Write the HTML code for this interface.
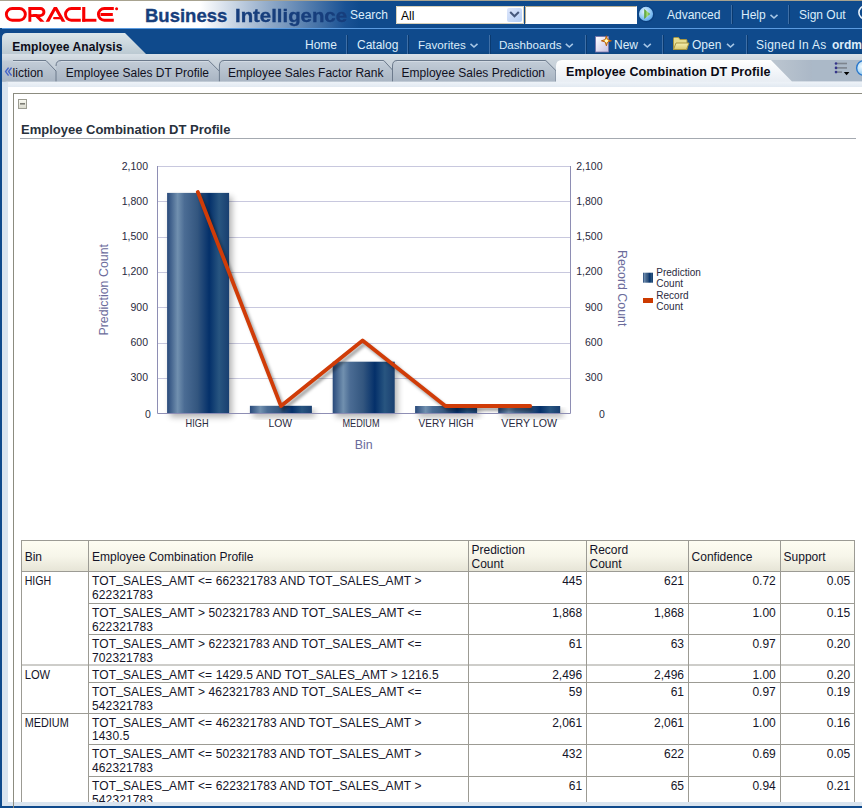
<!DOCTYPE html>
<html><head><meta charset="utf-8">
<style>
html,body{margin:0;padding:0;}
body{width:862px;height:808px;overflow:hidden;position:relative;background:#fff;font-family:"Liberation Sans",sans-serif;}
.a{position:absolute;}
.t{position:absolute;white-space:pre;line-height:1;}
#topline{left:0;top:0;width:862px;height:1px;background:#a8a390;}
#hdr{left:0;top:1px;width:862px;height:27px;background:linear-gradient(to right,#fff 0,#fff 200px,#9fb5cf 260px,#1a5294 345px,#0f4a8c 360px,#0f4a8c 100%);}
#hline{left:0;top:28px;width:862px;height:1px;background:#5b9be0;}
#nav{left:0;top:29px;width:862px;height:25px;background:linear-gradient(#0f4a8c 0,#0f4a8c 21px,#0c4680 25px);}
.nv{color:#dcedfa;font-size:12px;margin-top:1px;}
.sep{position:absolute;width:1px;background:#3f6fa6;border-right:1px solid #0a3a70;}
#strip{left:0;top:54px;width:862px;height:28px;background:linear-gradient(#d5dde4,#c5cfd9 6px,#b7c3cf 27px);}
#below{left:2px;top:81px;width:860px;height:6px;background:#e1e9f1;}
#leftbar{left:0;top:28px;width:2px;height:780px;background:#0f4a8c;}
#frameL{left:2px;top:82px;width:6px;height:724px;background:#d9e4ef;}
#frameB{left:2px;top:802px;width:860px;height:4px;background:#d9e4ef;}
#botbar{left:0;top:806px;width:862px;height:2px;background:#0f4a8c;}
#box{left:13px;top:93px;width:900px;height:900px;border:1px solid #8c8c80;box-sizing:border-box;}
.tb{font-size:12px;color:#111;}
.tab{font-size:12px;color:#10101e;}
</style></head><body>
<div class="a" id="topline"></div>
<div class="a" id="hdr"></div>
<div class="a" id="hline"></div>
<div class="a" id="nav"></div>
<div class="a" id="strip"></div>
<div class="a" id="leftbar"></div>

<!-- ORACLE logo -->
<svg class="a" style="left:0;top:0" width="130" height="28" viewBox="0 0 130 28">
 <g fill="none" stroke="#f80000" stroke-width="2.9">
  <rect x="6.35" y="8.45" width="19" height="11.8" rx="5.9" ry="5.9"/>
  <path d="M113.8,8.45 H104.3 A5.85,5.85 0 0 0 104.3,20.25 H113.8"/>
  <path d="M80.8,8.45 H71.4 A5.85,5.85 0 0 0 71.4,20.25 H80.8"/>
  <path d="M29.85,7 V21.7 M28.3,8.5 H40.4 A3.55,3.55 0 0 1 40.4,15.6 H31"/>
 </g>
 <g fill="#f80000">
  <polygon points="32.6,14.1 36.8,14.1 44.6,21.7 40.2,21.7"/>
  <polygon points="45.6,21.7 53.9,7 56.9,7 65.4,21.7 61.8,21.7 55.4,10.6 49.3,21.7"/>
  <path d="M54.2,17 H59.5 L60.8,19.3 H54.2 A1.15,1.15 0 0 1 54.2,17 Z"/>
  <rect x="82.2" y="7" width="3.1" height="14.7"/>
  <rect x="82.2" y="18.8" width="14.2" height="2.9"/>
  <rect x="100.5" y="13" width="12.3" height="3"/>
  <circle cx="116.6" cy="8.8" r="1.5"/>
 </g>
</svg>

<div class="t" style="left:145px;top:7px;font-size:18.5px;font-weight:bold;color:#173e7c;-webkit-text-stroke:0.35px #173e7c">Business</div>
<div class="t" style="left:234.5px;top:7px;font-size:18.5px;font-weight:bold;color:#173e7c;-webkit-text-stroke:0.35px #173e7c;transform-origin:0 0;transform:scaleX(1.1)">Intelligence</div>
<div class="t nv" style="left:350px;top:9px;margin-top:0">Search</div>
<svg class="a" style="left:390px;top:0" width="280" height="28" viewBox="390 0 280 28">
 <defs>
  <linearGradient id="gDd" x1="0" y1="0" x2="1" y2="1"><stop offset="0" stop-color="#dfe7fb"/><stop offset="1" stop-color="#b3cdf5"/></linearGradient>
  <radialGradient id="gGo" cx="0.4" cy="0.35" r="0.7"><stop offset="0" stop-color="#e4f4ff"/><stop offset="0.6" stop-color="#93c9f5"/><stop offset="1" stop-color="#5aa6ea"/></radialGradient>
  <linearGradient id="gTri" x1="0" y1="0" x2="1" y2="0"><stop offset="0" stop-color="#3f8f1f"/><stop offset="0.5" stop-color="#a9de7a"/><stop offset="1" stop-color="#4b9a25"/></linearGradient>
 </defs>
 <rect x="396" y="6" width="128" height="18" fill="#fff"/>
 <path d="M396.5,23.5 V6.5 H523.5 V23.5 Z" fill="none" stroke="#d8d0b8" stroke-width="1"/>
 <rect x="507" y="8" width="15" height="14" rx="2" fill="url(#gDd)"/>
 <path d="M510.2,12 L514.5,16.3 L518.8,12" fill="none" stroke="#46587c" stroke-width="2"/>
 <rect x="525" y="6" width="112" height="18" fill="#fff"/>
 <path d="M525.5,23.5 V6.5 H636.5" fill="none" stroke="#b8ad90" stroke-width="1"/>
 <circle cx="646.2" cy="14.2" r="8.2" fill="#0a3a78" opacity="0.7"/>
 <circle cx="646" cy="13.9" r="7.1" fill="url(#gGo)"/>
 <path d="M644.3,9.1 L650.2,14 L644.3,18.9 Z" fill="url(#gTri)"/>
</svg>
<div class="t" style="left:401px;top:10px;font-size:12px;color:#000">All</div>
<div class="t nv" style="left:667px;top:9px;margin-top:0">Advanced</div>
<div class="sep" style="left:731px;top:5px;height:19px"></div>
<div class="t nv" style="left:741px;top:9px;margin-top:0">Help</div>
<div class="sep" style="left:788px;top:5px;height:19px"></div>
<div class="t nv" style="left:799px;top:9px;margin-top:0">Sign Out</div>

<!-- nav row 2 -->
<div class="t nv" style="left:305px;top:38px;">Home</div>
<div class="sep" style="left:346px;top:35px;height:19px"></div>
<div class="t nv" style="left:357px;top:38px;">Catalog</div>
<div class="sep" style="left:407px;top:35px;height:19px"></div>
<div class="t nv" style="left:418px;top:38px;font-size:11.6px">Favorites</div>
<div class="sep" style="left:489px;top:35px;height:19px"></div>
<div class="t nv" style="left:499px;top:38px;font-size:11.6px">Dashboards</div>
<div class="sep" style="left:585px;top:35px;height:19px"></div>
<div class="t nv" style="left:614px;top:38px;">New</div>
<div class="sep" style="left:662px;top:35px;height:19px"></div>
<div class="t nv" style="left:692px;top:38px;">Open</div>
<div class="sep" style="left:746px;top:35px;height:19px"></div>
<div class="t nv" style="left:756px;top:38px;letter-spacing:0.25px">Signed In As</div>
<div class="t nv" style="left:832px;top:38px;font-weight:bold">ordm</div>


<!-- nav icons -->
<svg class="a" style="left:460px;top:28px" width="330" height="26" viewBox="460 28 330 26">
 <defs>
  <linearGradient id="gDoc" x1="0" y1="0" x2="1" y2="1"><stop offset="0" stop-color="#ffffff"/><stop offset="1" stop-color="#c6c0e0"/></linearGradient>
  <radialGradient id="gStar" cx="0.5" cy="0.5" r="0.5"><stop offset="0" stop-color="#fffbd0"/><stop offset="0.5" stop-color="#ffd820"/><stop offset="1" stop-color="#c86010"/></radialGradient>
  <linearGradient id="gFold" x1="0" y1="0" x2="0" y2="1"><stop offset="0" stop-color="#f6f0b0"/><stop offset="1" stop-color="#d8c870"/></linearGradient>
 </defs>
 <g fill="none" stroke="#a6c6e6" stroke-width="1.6">
  <path d="M470.5,43.8 L474,47 L477.5,43.8"/>
  <path d="M565.8,43.8 L569.3,47 L572.8,43.8"/>
  <path d="M643.8,43.8 L647.3,47 L650.8,43.8"/>
  <path d="M727,43.8 L730.5,47 L734,43.8"/>
 </g>
 <rect x="595.6" y="36.6" width="13" height="15.4" fill="url(#gDoc)" stroke="#7a74a8" stroke-width="0.8"/>
 <path d="M606.4,35.8 L607.5,39.6 L611.4,40.8 L607.5,42 L606.4,45.8 L605.3,42 L601.4,40.8 L605.3,39.6 Z" fill="#ffe030" stroke="#b85a10" stroke-width="1"/>
 <circle cx="606.4" cy="40.8" r="1.6" fill="#fffbd0"/>
 <path d="M673.5,49.5 V38.5 Q673.5,37.5 674.5,37.5 H678.5 L680,39.5 H686 Q687,39.5 687,40.5 V49.5 Z" fill="#e6dc90" stroke="#a89640" stroke-width="1"/>
 <path d="M673.5,49.5 L676,43 H689 L686.5,49.5 Z" fill="url(#gFold)" stroke="#a89640" stroke-width="1"/>
</svg>
<svg class="a" style="left:850px;top:0" width="12" height="28" viewBox="850 0 12 28"><circle cx="865.5" cy="12.5" r="6.6" fill="none" stroke="#e8f2fc" stroke-width="1.6"/></svg>
<svg class="a" style="left:740px;top:0" width="60" height="28" viewBox="740 0 60 28">
 <path d="M770.5,14.8 L774,18 L777.5,14.8" fill="none" stroke="#a6c6e6" stroke-width="1.6"/>
</svg>


<!-- Employee Analysis tab -->
<svg class="a" style="left:0;top:28px" width="160" height="27" viewBox="0 0 160 27">
 <defs><linearGradient id="gEA" x1="0" y1="0" x2="0" y2="1"><stop offset="0" stop-color="#dce6ea"/><stop offset="1" stop-color="#bac8d1"/></linearGradient></defs>
 <path d="M2,27 L2,10 Q2,5 7,5 L125,5 L147,27 Z" fill="url(#gEA)"/>
</svg>
<div class="t" style="left:12.3px;top:40.8px;font-size:12px;font-weight:bold;color:#0c0c18;letter-spacing:0.07px">Employee Analysis</div>


<!-- sub tabs -->
<svg class="a" style="left:0;top:54px" width="862" height="34" viewBox="0 54 862 34">
 <defs>
  <linearGradient id="gTab" x1="0" y1="0" x2="0" y2="1"><stop offset="0" stop-color="#c3cdd8"/><stop offset="1" stop-color="#a9b5c3"/></linearGradient>
  <linearGradient id="gAct" x1="0" y1="0" x2="0" y2="1"><stop offset="0" stop-color="#ffffff"/><stop offset="1" stop-color="#e1e8f0"/></linearGradient>
  <linearGradient id="gShadow" x1="0" y1="0" x2="1" y2="0"><stop offset="0" stop-color="#bcc6d0"/><stop offset="1" stop-color="#abb8c7"/></linearGradient>
 </defs>
 <linearGradient id="gStrip" x1="0" y1="0" x2="0" y2="1"><stop offset="0" stop-color="#d9e1e7"/><stop offset="0.25" stop-color="#cbd4dc"/><stop offset="1" stop-color="#bcc7d2"/></linearGradient>
 <rect x="2" y="54" width="860" height="28" fill="url(#gStrip)"/>
 <rect x="770" y="60" width="92" height="22" fill="#abb9c8"/>
 <path d="M771,60 L792,81.5 L812,81.5 L812,60 Z" fill="url(#gShadow)"/>
 <path d="M2,81.5 V60.5 H46 L56,71 V81.5 Z" fill="url(#gTab)"/>
 <path d="M56,81.5 V66 Q56,60.5 61,60.5 H208.7 L219,70.8 V81.5 Z" fill="url(#gTab)"/>
 <path d="M219.4,81.5 V66 Q219.4,60.5 224,60.5 H383.8 L392.5,70 V81.5 Z" fill="url(#gTab)"/>
 <path d="M392.5,81.5 V66 Q392.5,60.5 397,60.5 H545.8 L556,70.7 V81.5 Z" fill="url(#gTab)"/>
 <g fill="none" stroke="#6c7a8c" stroke-width="1">
  <path d="M13,60.5 H46 L56,71 V81.5"/>
  <path d="M56,66 Q56,60.5 61,60.5 H208.7 L219,70.8"/>
  <path d="M219.4,81.5 V66 Q219.4,60.5 224,60.5 H383.8 L392.5,70"/>
  <path d="M392.5,81.5 V66 Q392.5,60.5 397,60.5 H545.8 L556,70.7 V81.5"/>
 </g>
 <g fill="none" stroke="#d2dae3" stroke-width="1">
  <path d="M13,61.5 H45.5"/><path d="M61,61.5 H208"/><path d="M224,61.5 H383"/><path d="M397,61.5 H545"/>
 </g>
 <path d="M556,88 V66 Q556,60 562,60 H771 L792,81.5 H862 V88 Z" fill="url(#gAct)"/>
 <linearGradient id="gFr" x1="0" y1="0" x2="0" y2="1"><stop offset="0" stop-color="#eef3f8"/><stop offset="1" stop-color="#dfe7f0"/></linearGradient>
 <path d="M2,88 V87 Q2,81.8 7,81.8 H862 V88 Z" fill="url(#gFr)"/>
</svg>
<svg class="a" style="left:826px;top:56px" width="36" height="26" viewBox="826 56 36 26">
 <defs><radialGradient id="gHelp" cx="0.35" cy="0.4" r="0.6"><stop offset="0" stop-color="#f0faff"/><stop offset="1" stop-color="#8fc8f0"/></radialGradient></defs>
 <g stroke="#7c848e" stroke-width="1.6"><path d="M837,63.5 H847"/><path d="M837,67.9 H847"/><path d="M837,72.1 H842"/></g>
 <g fill="#35358a"><circle cx="836" cy="63.5" r="1.3"/><circle cx="836" cy="67.9" r="1.3"/><circle cx="836" cy="72.1" r="1.3"/></g>
 <path d="M843.8,72 H849.4 L846.6,75.2 Z" fill="#000"/>
 <circle cx="864" cy="68" r="7.4" fill="url(#gHelp)" stroke="#2a78cc" stroke-width="1.4"/>
</svg>
<svg class="a" style="left:0;top:60px" width="14" height="22" viewBox="0 60 14 22"><g fill="none" stroke="#4766c8" stroke-width="1.5"><path d="M8.6,67.6 L5.6,71.6 L8.6,75.6"/><path d="M11.6,67.6 L8.6,71.6 L11.6,75.6"/></g></svg>
<div class="t tab" style="left:12.6px;top:67px;">liction</div>
<div class="t tab" style="left:65.8px;top:67px;">Employee Sales DT Profile</div>
<div class="t tab" style="left:228px;top:67px;">Employee Sales Factor Rank</div>
<div class="t tab" style="left:401.6px;top:67px;">Employee Sales Prediction</div>
<div class="t" style="left:566px;top:66px;font-size:12.5px;font-weight:bold;color:#0a0a14;letter-spacing:0.1px">Employee Combination DT Profile</div>

<div class="a" id="frameL"></div>
<div class="a" style="left:8px;top:87px;width:854px;height:715px;background:#fff"></div>
<div class="a" id="frameB"></div>
<div class="a" id="botbar"></div>
<div class="a" id="box"></div>

<!-- content -->
<svg class="a" style="left:0;top:88px" width="862" height="714" viewBox="0 88 862 714">
 <defs>
  <linearGradient id="gHd" x1="0" y1="0" x2="0" y2="1"><stop offset="0" stop-color="#fefdf2"/><stop offset="0.5" stop-color="#f7f6ea"/><stop offset="1" stop-color="#e6e4d6"/></linearGradient>
  <linearGradient id="gMin" x1="0" y1="0" x2="0" y2="1"><stop offset="0" stop-color="#fbfbf4"/><stop offset="1" stop-color="#d8d8cc"/></linearGradient>
 </defs>
 <rect x="18.5" y="99.5" width="8" height="9" fill="url(#gMin)" stroke="#9c9c92" stroke-width="1"/>
 <rect x="20" y="103" width="5" height="1.6" fill="#7c7c74"/>
 <text x="21" y="133.8" font-family="Liberation Sans" font-size="13" font-weight="bold" fill="#28313c">Employee Combination DT Profile</text>
 <rect x="20" y="138" width="836" height="1" fill="#a4a9b0"/>

 <rect x="21.5" y="540.5" width="833.0" height="31.0" fill="url(#gHd)"/>
 <line x1="21.0" y1="540.5" x2="855.0" y2="540.5" stroke="#9c9b94" stroke-width="1"/>
 <line x1="21.0" y1="571.5" x2="855.0" y2="571.5" stroke="#9c9b94" stroke-width="1"/>
 <line x1="88.5" y1="603.5" x2="854.5" y2="603.5" stroke="#9c9b94" stroke-width="1"/>
 <line x1="88.5" y1="634.5" x2="854.5" y2="634.5" stroke="#9c9b94" stroke-width="1"/>
 <line x1="21.5" y1="665" x2="854.5" y2="665" stroke="#9c9b94" stroke-width="1"/>
 <line x1="88.5" y1="682.5" x2="854.5" y2="682.5" stroke="#9c9b94" stroke-width="1"/>
 <line x1="21.5" y1="713.5" x2="854.5" y2="713.5" stroke="#9c9b94" stroke-width="1"/>
 <line x1="88.5" y1="744.5" x2="854.5" y2="744.5" stroke="#9c9b94" stroke-width="1"/>
 <line x1="88.5" y1="776.5" x2="854.5" y2="776.5" stroke="#9c9b94" stroke-width="1"/>
 <line x1="21.5" y1="540.5" x2="21.5" y2="810" stroke="#9c9b94" stroke-width="1"/>
 <line x1="88.5" y1="540.5" x2="88.5" y2="810" stroke="#9c9b94" stroke-width="1"/>
 <line x1="468.5" y1="540.5" x2="468.5" y2="810" stroke="#9c9b94" stroke-width="1"/>
 <line x1="586.5" y1="540.5" x2="586.5" y2="810" stroke="#9c9b94" stroke-width="1"/>
 <line x1="688.5" y1="540.5" x2="688.5" y2="810" stroke="#9c9b94" stroke-width="1"/>
 <line x1="780.5" y1="540.5" x2="780.5" y2="810" stroke="#9c9b94" stroke-width="1"/>
 <line x1="854.5" y1="540.5" x2="854.5" y2="810" stroke="#9c9b94" stroke-width="1"/>
 <text x="24.7" y="560.9" font-family="Liberation Sans" font-size="12" fill="#141428">Bin</text>
 <text x="92" y="560.9" font-family="Liberation Sans" font-size="12" fill="#141428">Employee Combination Profile</text>
 <text x="471.5" y="554.4" font-family="Liberation Sans" font-size="12" fill="#141428">Prediction</text>
 <text x="471.5" y="567.8" font-family="Liberation Sans" font-size="12" fill="#141428">Count</text>
 <text x="589.5" y="554.4" font-family="Liberation Sans" font-size="12" fill="#141428">Record</text>
 <text x="589.5" y="567.8" font-family="Liberation Sans" font-size="12" fill="#141428">Count</text>
 <text x="691.6" y="560.9" font-family="Liberation Sans" font-size="12" fill="#141428">Confidence</text>
 <text x="783.6" y="560.9" font-family="Liberation Sans" font-size="12" fill="#141428">Support</text>
 <text x="24.7" y="585.0" textLength="26.5" lengthAdjust="spacingAndGlyphs" font-family="Liberation Sans" font-size="12" fill="#141428">HIGH</text>
 <text x="92" y="585.0" style="letter-spacing:0.12px" font-family="Liberation Sans" font-size="12" fill="#141428">TOT<tspan dy="-1.8">_</tspan><tspan dy="1.8">SALES</tspan><tspan dy="-1.8">_</tspan><tspan dy="1.8">AMT &lt;= 662321783 AND TOT</tspan><tspan dy="-1.8">_</tspan><tspan dy="1.8">SALES</tspan><tspan dy="-1.8">_</tspan><tspan dy="1.8">AMT &gt;</tspan></text>
 <text x="92" y="598.8" style="letter-spacing:0.12px" font-family="Liberation Sans" font-size="12" fill="#141428">622321783</text>
 <text x="582.2" y="585.0" text-anchor="end" font-family="Liberation Sans" font-size="12" fill="#141428">445</text>
 <text x="684" y="585.0" text-anchor="end" font-family="Liberation Sans" font-size="12" fill="#141428">621</text>
 <text x="775.8" y="585.0" text-anchor="end" font-family="Liberation Sans" font-size="12" fill="#141428">0.72</text>
 <text x="850.2" y="585.0" text-anchor="end" font-family="Liberation Sans" font-size="12" fill="#141428">0.05</text>
 <text x="92" y="616.8" style="letter-spacing:0.12px" font-family="Liberation Sans" font-size="12" fill="#141428">TOT<tspan dy="-1.8">_</tspan><tspan dy="1.8">SALES</tspan><tspan dy="-1.8">_</tspan><tspan dy="1.8">AMT &gt; 502321783 AND TOT</tspan><tspan dy="-1.8">_</tspan><tspan dy="1.8">SALES</tspan><tspan dy="-1.8">_</tspan><tspan dy="1.8">AMT &lt;=</tspan></text>
 <text x="92" y="630.6" style="letter-spacing:0.12px" font-family="Liberation Sans" font-size="12" fill="#141428">622321783</text>
 <text x="582.2" y="616.8" text-anchor="end" font-family="Liberation Sans" font-size="12" fill="#141428">1,868</text>
 <text x="684" y="616.8" text-anchor="end" font-family="Liberation Sans" font-size="12" fill="#141428">1,868</text>
 <text x="775.8" y="616.8" text-anchor="end" font-family="Liberation Sans" font-size="12" fill="#141428">1.00</text>
 <text x="850.2" y="616.8" text-anchor="end" font-family="Liberation Sans" font-size="12" fill="#141428">0.15</text>
 <text x="92" y="647.7" style="letter-spacing:0.12px" font-family="Liberation Sans" font-size="12" fill="#141428">TOT<tspan dy="-1.8">_</tspan><tspan dy="1.8">SALES</tspan><tspan dy="-1.8">_</tspan><tspan dy="1.8">AMT &gt; 622321783 AND TOT</tspan><tspan dy="-1.8">_</tspan><tspan dy="1.8">SALES</tspan><tspan dy="-1.8">_</tspan><tspan dy="1.8">AMT &lt;=</tspan></text>
 <text x="92" y="661.5" style="letter-spacing:0.12px" font-family="Liberation Sans" font-size="12" fill="#141428">702321783</text>
 <text x="582.2" y="647.7" text-anchor="end" font-family="Liberation Sans" font-size="12" fill="#141428">61</text>
 <text x="684" y="647.7" text-anchor="end" font-family="Liberation Sans" font-size="12" fill="#141428">63</text>
 <text x="775.8" y="647.7" text-anchor="end" font-family="Liberation Sans" font-size="12" fill="#141428">0.97</text>
 <text x="850.2" y="647.7" text-anchor="end" font-family="Liberation Sans" font-size="12" fill="#141428">0.20</text>
 <text x="24.7" y="678.5" textLength="25.5" lengthAdjust="spacingAndGlyphs" font-family="Liberation Sans" font-size="12" fill="#141428">LOW</text>
 <text x="92" y="678.5" style="letter-spacing:0.12px" font-family="Liberation Sans" font-size="12" fill="#141428">TOT<tspan dy="-1.8">_</tspan><tspan dy="1.8">SALES</tspan><tspan dy="-1.8">_</tspan><tspan dy="1.8">AMT &lt;= 1429.5 AND TOT</tspan><tspan dy="-1.8">_</tspan><tspan dy="1.8">SALES</tspan><tspan dy="-1.8">_</tspan><tspan dy="1.8">AMT &gt; 1216.5</tspan></text>
 <text x="582.2" y="678.5" text-anchor="end" font-family="Liberation Sans" font-size="12" fill="#141428">2,496</text>
 <text x="684" y="678.5" text-anchor="end" font-family="Liberation Sans" font-size="12" fill="#141428">2,496</text>
 <text x="775.8" y="678.5" text-anchor="end" font-family="Liberation Sans" font-size="12" fill="#141428">1.00</text>
 <text x="850.2" y="678.5" text-anchor="end" font-family="Liberation Sans" font-size="12" fill="#141428">0.20</text>
 <text x="92" y="695.9" style="letter-spacing:0.12px" font-family="Liberation Sans" font-size="12" fill="#141428">TOT<tspan dy="-1.8">_</tspan><tspan dy="1.8">SALES</tspan><tspan dy="-1.8">_</tspan><tspan dy="1.8">AMT &gt; 462321783 AND TOT</tspan><tspan dy="-1.8">_</tspan><tspan dy="1.8">SALES</tspan><tspan dy="-1.8">_</tspan><tspan dy="1.8">AMT &lt;=</tspan></text>
 <text x="92" y="709.7" style="letter-spacing:0.12px" font-family="Liberation Sans" font-size="12" fill="#141428">542321783</text>
 <text x="582.2" y="695.9" text-anchor="end" font-family="Liberation Sans" font-size="12" fill="#141428">59</text>
 <text x="684" y="695.9" text-anchor="end" font-family="Liberation Sans" font-size="12" fill="#141428">61</text>
 <text x="775.8" y="695.9" text-anchor="end" font-family="Liberation Sans" font-size="12" fill="#141428">0.97</text>
 <text x="850.2" y="695.9" text-anchor="end" font-family="Liberation Sans" font-size="12" fill="#141428">0.19</text>
 <text x="24.7" y="726.6" textLength="44" lengthAdjust="spacingAndGlyphs" font-family="Liberation Sans" font-size="12" fill="#141428">MEDIUM</text>
 <text x="92" y="726.6" style="letter-spacing:0.12px" font-family="Liberation Sans" font-size="12" fill="#141428">TOT<tspan dy="-1.8">_</tspan><tspan dy="1.8">SALES</tspan><tspan dy="-1.8">_</tspan><tspan dy="1.8">AMT &lt;= 462321783 AND TOT</tspan><tspan dy="-1.8">_</tspan><tspan dy="1.8">SALES</tspan><tspan dy="-1.8">_</tspan><tspan dy="1.8">AMT &gt;</tspan></text>
 <text x="92" y="740.4" style="letter-spacing:0.12px" font-family="Liberation Sans" font-size="12" fill="#141428">1430.5</text>
 <text x="582.2" y="726.6" text-anchor="end" font-family="Liberation Sans" font-size="12" fill="#141428">2,061</text>
 <text x="684" y="726.6" text-anchor="end" font-family="Liberation Sans" font-size="12" fill="#141428">2,061</text>
 <text x="775.8" y="726.6" text-anchor="end" font-family="Liberation Sans" font-size="12" fill="#141428">1.00</text>
 <text x="850.2" y="726.6" text-anchor="end" font-family="Liberation Sans" font-size="12" fill="#141428">0.16</text>
 <text x="92" y="758.0" style="letter-spacing:0.12px" font-family="Liberation Sans" font-size="12" fill="#141428">TOT<tspan dy="-1.8">_</tspan><tspan dy="1.8">SALES</tspan><tspan dy="-1.8">_</tspan><tspan dy="1.8">AMT &lt;= 502321783 AND TOT</tspan><tspan dy="-1.8">_</tspan><tspan dy="1.8">SALES</tspan><tspan dy="-1.8">_</tspan><tspan dy="1.8">AMT &gt;</tspan></text>
 <text x="92" y="771.8" style="letter-spacing:0.12px" font-family="Liberation Sans" font-size="12" fill="#141428">462321783</text>
 <text x="582.2" y="758.0" text-anchor="end" font-family="Liberation Sans" font-size="12" fill="#141428">432</text>
 <text x="684" y="758.0" text-anchor="end" font-family="Liberation Sans" font-size="12" fill="#141428">622</text>
 <text x="775.8" y="758.0" text-anchor="end" font-family="Liberation Sans" font-size="12" fill="#141428">0.69</text>
 <text x="850.2" y="758.0" text-anchor="end" font-family="Liberation Sans" font-size="12" fill="#141428">0.05</text>
 <text x="92" y="789.9" style="letter-spacing:0.12px" font-family="Liberation Sans" font-size="12" fill="#141428">TOT<tspan dy="-1.8">_</tspan><tspan dy="1.8">SALES</tspan><tspan dy="-1.8">_</tspan><tspan dy="1.8">AMT &lt;= 622321783 AND TOT</tspan><tspan dy="-1.8">_</tspan><tspan dy="1.8">SALES</tspan><tspan dy="-1.8">_</tspan><tspan dy="1.8">AMT &gt;</tspan></text>
 <text x="92" y="803.7" style="letter-spacing:0.12px" font-family="Liberation Sans" font-size="12" fill="#141428">542321783</text>
 <text x="582.2" y="789.9" text-anchor="end" font-family="Liberation Sans" font-size="12" fill="#141428">61</text>
 <text x="684" y="789.9" text-anchor="end" font-family="Liberation Sans" font-size="12" fill="#141428">65</text>
 <text x="775.8" y="789.9" text-anchor="end" font-family="Liberation Sans" font-size="12" fill="#141428">0.94</text>
 <text x="850.2" y="789.9" text-anchor="end" font-family="Liberation Sans" font-size="12" fill="#141428">0.21</text>
</svg>
<!-- chart -->
<svg class="a" style="left:0;top:140px" width="862" height="320" viewBox="0 140 862 320">
 <defs>
  <linearGradient id="gBar" x1="0" y1="0" x2="1" y2="0">
   <stop offset="0" stop-color="#28497a"/>
   <stop offset="0.17" stop-color="#7190af"/>
   <stop offset="0.28" stop-color="#4b6c94"/>
   <stop offset="0.49" stop-color="#33567f"/>
   <stop offset="0.68" stop-color="#04306a"/>
   <stop offset="0.84" stop-color="#285580"/>
   <stop offset="1" stop-color="#193f70"/>
  </linearGradient>
  <filter id="fSh" x="-30%" y="-30%" width="160%" height="160%"><feGaussianBlur stdDeviation="3"/></filter>
  <filter id="fLs" x="-10%" y="-10%" width="120%" height="120%"><feGaussianBlur stdDeviation="1.5"/></filter>
 </defs>

 <line x1="158" y1="166.5" x2="570" y2="166.5" stroke="#c8c8de" stroke-width="1"/>
 <line x1="158" y1="201.5" x2="570" y2="201.5" stroke="#c8c8de" stroke-width="1"/>
 <line x1="158" y1="237.5" x2="570" y2="237.5" stroke="#c8c8de" stroke-width="1"/>
 <line x1="158" y1="272.5" x2="570" y2="272.5" stroke="#c8c8de" stroke-width="1"/>
 <line x1="158" y1="307.5" x2="570" y2="307.5" stroke="#c8c8de" stroke-width="1"/>
 <line x1="158" y1="343.5" x2="570" y2="343.5" stroke="#c8c8de" stroke-width="1"/>
 <line x1="158" y1="378.5" x2="570" y2="378.5" stroke="#c8c8de" stroke-width="1"/>
 <rect x="170.1" y="196.9" width="62" height="220.1" fill="#000" opacity="0.3" filter="url(#fSh)"/>
 <rect x="252.9" y="409.8" width="62" height="7.2" fill="#000" opacity="0.3" filter="url(#fSh)"/>
 <rect x="335.7" y="365.7" width="62" height="51.3" fill="#000" opacity="0.3" filter="url(#fSh)"/>
 <rect x="418.1" y="410.0" width="62" height="7.0" fill="#000" opacity="0.3" filter="url(#fSh)"/>
 <rect x="501.2" y="410.0" width="62" height="7.0" fill="#000" opacity="0.3" filter="url(#fSh)"/>
 <rect x="167.1" y="192.9" width="62" height="220.1" fill="url(#gBar)"/>
 <rect x="249.9" y="405.8" width="62" height="7.2" fill="url(#gBar)"/>
 <rect x="332.7" y="361.7" width="62" height="51.3" fill="url(#gBar)"/>
 <rect x="415.1" y="406.0" width="62" height="7.0" fill="url(#gBar)"/>
 <rect x="498.2" y="406.0" width="62" height="7.0" fill="url(#gBar)"/>
 <path d="M157.5,166 V413.5 H570.5 V166" fill="none" stroke="#8e8eb4" stroke-width="1"/>
 <polyline points="197.8,192 281,406.1 362.6,340.5 445.4,406 530.2,406" transform="translate(2.5,3)" fill="none" stroke="#000" stroke-opacity="0.35" stroke-width="4" filter="url(#fLs)"/>
 <polyline points="197.8,192 281,406.1 362.6,340.5 445.4,406 530.2,406" fill="none" stroke="#d03c08" stroke-width="3.8" stroke-linejoin="round" stroke-linecap="round"/>
 <text x="148" y="169.6" text-anchor="end" font-family="Liberation Sans" font-size="10.5" fill="#2a2a40">2,100</text>
 <text x="602.5" y="169.6" text-anchor="end" font-family="Liberation Sans" font-size="10.5" fill="#2a2a40">2,100</text>
 <text x="148" y="204.9" text-anchor="end" font-family="Liberation Sans" font-size="10.5" fill="#2a2a40">1,800</text>
 <text x="602.5" y="204.9" text-anchor="end" font-family="Liberation Sans" font-size="10.5" fill="#2a2a40">1,800</text>
 <text x="148" y="240.1" text-anchor="end" font-family="Liberation Sans" font-size="10.5" fill="#2a2a40">1,500</text>
 <text x="602.5" y="240.1" text-anchor="end" font-family="Liberation Sans" font-size="10.5" fill="#2a2a40">1,500</text>
 <text x="148" y="275.4" text-anchor="end" font-family="Liberation Sans" font-size="10.5" fill="#2a2a40">1,200</text>
 <text x="602.5" y="275.4" text-anchor="end" font-family="Liberation Sans" font-size="10.5" fill="#2a2a40">1,200</text>
 <text x="148" y="310.6" text-anchor="end" font-family="Liberation Sans" font-size="10.5" fill="#2a2a40">900</text>
 <text x="602.5" y="310.6" text-anchor="end" font-family="Liberation Sans" font-size="10.5" fill="#2a2a40">900</text>
 <text x="148" y="345.9" text-anchor="end" font-family="Liberation Sans" font-size="10.5" fill="#2a2a40">600</text>
 <text x="602.5" y="345.9" text-anchor="end" font-family="Liberation Sans" font-size="10.5" fill="#2a2a40">600</text>
 <text x="148" y="381.1" text-anchor="end" font-family="Liberation Sans" font-size="10.5" fill="#2a2a40">300</text>
 <text x="602.5" y="381.1" text-anchor="end" font-family="Liberation Sans" font-size="10.5" fill="#2a2a40">300</text>
 <text x="150.8" y="417.7" text-anchor="end" font-family="Liberation Sans" font-size="10.5" fill="#2a2a40">0</text>
 <text x="604.8" y="417.7" text-anchor="end" font-family="Liberation Sans" font-size="10.5" fill="#2a2a40">0</text>
 <text x="185.6" y="427" textLength="23" lengthAdjust="spacingAndGlyphs" font-family="Liberation Sans" font-size="11" fill="#2a2a40">HIGH</text>
 <text x="268.4" y="427" textLength="23.7" lengthAdjust="spacingAndGlyphs" font-family="Liberation Sans" font-size="11" fill="#2a2a40">LOW</text>
 <text x="342.5" y="427" textLength="37" lengthAdjust="spacingAndGlyphs" font-family="Liberation Sans" font-size="11" fill="#2a2a40">MEDIUM</text>
 <text x="418.6" y="427" textLength="55" lengthAdjust="spacingAndGlyphs" font-family="Liberation Sans" font-size="11" fill="#2a2a40">VERY HIGH</text>
 <text x="501.3" y="427" textLength="55.7" lengthAdjust="spacingAndGlyphs" font-family="Liberation Sans" font-size="11" fill="#2a2a40">VERY LOW</text>
 <text x="363.8" y="449" text-anchor="middle" font-family="Liberation Sans" font-size="12.4" fill="#6b6b9b">Bin</text>
 <text transform="translate(108.2,289.8) rotate(-90)" text-anchor="middle" font-family="Liberation Sans" font-size="12.4" fill="#6b6b9b">Prediction Count</text>
 <text transform="translate(617.8,288.2) rotate(90)" text-anchor="middle" font-family="Liberation Sans" font-size="12.4" fill="#6b6b9b">Record Count</text>
 <rect x="643" y="272.7" width="10" height="10" fill="url(#gBar)"/>
 <rect x="643" y="298" width="10" height="5" fill="#cc3a00"/>
 <text x="656.3" y="276" font-family="Liberation Sans" font-size="10" fill="#2a2a40">Prediction</text>
 <text x="656.3" y="286.5" font-family="Liberation Sans" font-size="10" fill="#2a2a40">Count</text>
 <text x="656.3" y="299" font-family="Liberation Sans" font-size="10" fill="#2a2a40">Record</text>
 <text x="656.3" y="309.5" font-family="Liberation Sans" font-size="10" fill="#2a2a40">Count</text>
</svg>
</body></html>
